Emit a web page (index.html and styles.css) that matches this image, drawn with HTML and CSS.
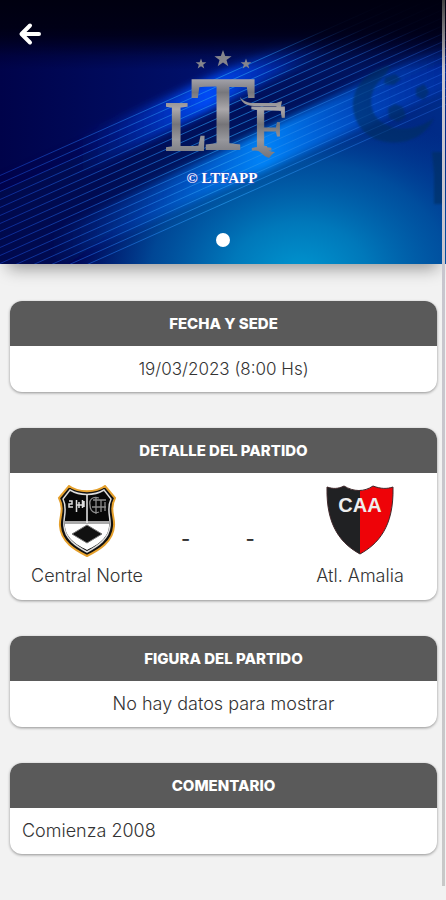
FILE: index.html
```html
<!DOCTYPE html>
<html lang="es">
<head>
<meta charset="utf-8">
<meta name="viewport" content="width=device-width, initial-scale=1">
<title>LTFAPP - Partido</title>
<link rel="stylesheet" href="styles.css">
</head>
<body>
<header class="hero">
  <svg class="hero-art" viewBox="0 0 446 264" role="img" aria-label="LTFAPP">
    <defs>
      <linearGradient id="base" x1="0" y1="0" x2="1" y2="0">
        <stop offset="0" stop-color="#00034a"/><stop offset=".45" stop-color="#00106a"/><stop offset="1" stop-color="#002c88"/>
      </linearGradient>
      <radialGradient id="pool" gradientUnits="userSpaceOnUse" cx="0" cy="0" r="1" gradientTransform="translate(300 275) scale(230 175)">
        <stop offset="0" stop-color="#0096d0"/><stop offset=".3" stop-color="#0078ba"/><stop offset=".65" stop-color="#005aa6" stop-opacity=".75"/><stop offset="1" stop-color="#00409a" stop-opacity="0"/>
      </radialGradient>
      <linearGradient id="night" x1="0" y1="0" x2="0" y2="1">
        <stop offset="0" stop-color="#000010"/><stop offset=".5" stop-color="#000016" stop-opacity=".9"/><stop offset="1" stop-color="#000030" stop-opacity="0"/>
      </linearGradient>
      <linearGradient id="ray" gradientUnits="userSpaceOnUse" x1="75" y1="0" x2="340" y2="0">
        <stop offset="0" stop-color="#0030c8" stop-opacity="0"/><stop offset=".5" stop-color="#004cf8"/><stop offset="1" stop-color="#0030c8" stop-opacity="0"/>
      </linearGradient>
      <linearGradient id="ray2" gradientUnits="userSpaceOnUse" x1="50" y1="0" x2="440" y2="0">
        <stop offset="0" stop-color="#0050d8" stop-opacity="0"/><stop offset=".25" stop-color="#0058d8" stop-opacity=".5"/><stop offset=".55" stop-color="#0088ff"/><stop offset="1" stop-color="#0038c8" stop-opacity=".4"/>
      </linearGradient>
      <linearGradient id="line" gradientUnits="userSpaceOnUse" x1="0" y1="0" x2="446" y2="0">
        <stop offset="0" stop-color="#1848d8" stop-opacity=".5"/><stop offset=".5" stop-color="#289cf0" stop-opacity=".65"/><stop offset="1" stop-color="#2868e8" stop-opacity=".35"/>
      </linearGradient>
      <linearGradient id="steel" gradientUnits="userSpaceOnUse" x1="0" y1="74" x2="0" y2="158">
        <stop offset="0" stop-color="#b4b2bb"/><stop offset=".22" stop-color="#77777c"/><stop offset=".42" stop-color="#aaa7aa"/><stop offset=".6" stop-color="#757478"/><stop offset=".78" stop-color="#97979c"/><stop offset="1" stop-color="#73747b"/>
      </linearGradient>
      <filter id="soft4" x="-20%" y="-20%" width="140%" height="140%"><feGaussianBlur stdDeviation="4"/></filter>
      <filter id="soft9" x="-30%" y="-30%" width="160%" height="160%"><feGaussianBlur stdDeviation="9"/></filter>
      <filter id="soft1" x="-20%" y="-20%" width="140%" height="140%"><feGaussianBlur stdDeviation="1"/></filter>
      <path id="beam" d="M-10 172 L460 -38"/>
      <path id="star" d="M0-9 2.2-2.9 8.6-2.8 3.5 1.1 5.3 7.3 0 3.6-5.3 7.3-3.5 1.1-8.6-2.8-2.2-2.9Z"/>
    </defs>
    <rect width="446" height="264" fill="url(#base)"/>
    <rect width="446" height="264" fill="url(#pool)"/>
    <path d="M-10 330V196L446 -4V60L180 180 60 270Z" fill="#000c50" opacity=".65" filter="url(#soft9)"/>
    <path d="M60 146 300 36 330 50 60 186Z" fill="url(#ray)" filter="url(#soft4)"/>
    <path d="M40 238 446 42 446 90 60 262Z" fill="url(#ray2)" opacity=".95" filter="url(#soft4)"/>
    <rect width="446" height="70" fill="url(#night)"/>
    <g stroke="url(#line)" stroke-width="1">
      <use href="#beam" y="8"/><use href="#beam" y="16"/><use href="#beam" y="24"/><use href="#beam" y="32"/><use href="#beam" y="40"/><use href="#beam" y="48"/><use href="#beam" y="56"/><use href="#beam" y="64"/><use href="#beam" y="72"/><use href="#beam" y="80"/><use href="#beam" y="88"/><use href="#beam" y="96"/><use href="#beam" y="104"/><use href="#beam" y="112"/><use href="#beam" y="120"/><use href="#beam" y="128"/><use href="#beam" y="136"/>
    </g>
    <rect width="446" height="56" fill="url(#night)"/>
    <g fill="#002f5c" opacity=".55" filter="url(#soft1)">
      <path d="M390 65C364 72 352 88 353 108C356 134 378 145 401 142C417 140 429 130 434 118C420 128 403 132 389 126C373 120 368 105 373 91C377 80 388 76 390 65Z"/>
      <path d="m385 77 10-3 6 5-7 6-10-1ZM388 108l7-4 8 3 3 10-8 5-9-4ZM416 88l8-4 5 8-5 8-8-4ZM432 152h12v52h-10v-30Z"/>
    </g>
    <g fill="url(#steel)">
      <text class="mark mark-l" x="165" y="150">L</text>
      <text class="mark mark-t" x="223" y="149" text-anchor="middle">T</text>
      <text class="mark mark-f" x="250" y="150">F</text>
      <path d="M240 97c3 4 8 6 14 6h22l6-2-2 10-4-5h-22c-8 0-13-4-14-9ZM254 150c7 0 8 6 15 8 3-4 5-5 6-6-6 0-8-3-8-6h-8c0 3-2 4-5 4Z"/>
    </g>
    <g fill="#85858c">
      <use href="#star" x="223" y="59"/>
      <use href="#star" transform="translate(201 64) scale(.62)"/>
      <use href="#star" transform="translate(246 64) scale(.62)"/>
    </g>
    <text class="brand" x="222" y="183" text-anchor="middle">© LTFAPP</text>
  </svg>
  <button class="back" type="button" aria-label="Volver">
    <svg viewBox="0 0 24 24" width="24" height="24"><path d="M12 3.500 3.500 12 12 20.500M4 12H21" fill="none" stroke="#fff" stroke-width="4" stroke-linecap="round" stroke-linejoin="round"/></svg>
  </button>
  <span class="dot"></span>
</header>
<main class="content">
  <section class="card">
    <h2>FECHA Y SEDE</h2>
    <p class="date">19/03/2023 (8:00 Hs)</p>
  </section>
  <section class="card">
    <h2>DETALLE DEL PARTIDO</h2>
    <div class="match">
      <div class="team">
        <svg class="crest" viewBox="0 0 72 72" aria-hidden="true">
          <path d="M18 1C27 8 45 8 54 1L64 13C58 25 64 32 63 41C62 57 48 65 36 71C24 65 10 57 9 41C8 32 14 25 8 13Z" fill="#111" stroke="#e5a02c" stroke-width="2"/>
          <path d="M19 5C29 11 43 11 53 5L60 14C55 24 60 32 59 41C58 54 47 61 36 67C25 61 14 54 13 41C12 32 17 24 12 14Z" fill="#080808" stroke="#ddd" stroke-width="1.500"/>
          <path d="M14 38H58C59 52 48 59 36 65C24 59 13 52 14 38Z" fill="#fff"/>
          <path d="M14 37.500H58" stroke="#aaa" stroke-width="3"/>
          <path d="M36 10V38" stroke="#eee" stroke-width="1.500"/>
          <path d="m36 40 15 9-15 9-15-9Z" fill="#111" stroke="#777"/>
          <path d="M18 16h3v3h-3v3h4M25.500 15v12M25 20h6M31.500 15v8M28 17v6M33 16v6" fill="none" stroke="#ddd" stroke-width="1.500"/>
          <path d="M48 13c-7-2-10 2-9 7 0 6 4 9 9 7M42 15h13M45 12v17M50 15v12M54 17v9M41 22h14" fill="none" stroke="#8c8c8c" stroke-width="1.300"/>
        </svg>
        <span>Central Norte</span>
      </div>
      <span class="score">-</span>
      <span class="score">-</span>
      <div class="team">
        <svg class="crest" viewBox="0 0 72 72" aria-hidden="true">
          <path d="M3 2C9 4 14 4 20 1C26 5 31 6 36 5V69C18 59 2 42 3 2Z" fill="#202123"/>
          <path d="M69 2C63 4 57 4 49 1C43 5 40 6 36 5V69C54 59 70 42 69 2Z" fill="#ee0308"/>
          <path d="M3 2C9 4 14 4 20 1C30 7 40 7 49 1C57 4 63 4 69 2C70 42 54 59 36 69C18 59 2 42 3 2Z" fill="none" stroke="#40282b"/>
          <text class="crest-text" x="36" y="27" text-anchor="middle">CAA</text>
        </svg>
        <span>Atl. Amalia</span>
      </div>
    </div>
  </section>
  <section class="card">
    <h2>FIGURA DEL PARTIDO</h2>
    <p>No hay datos para mostrar</p>
  </section>
  <section class="card">
    <h2>COMENTARIO</h2>
    <p class="comment">Comienza 2008</p>
  </section>
</main>
<div class="scrollbar"></div>
</body>
</html>
```
FILE: styles.css
```css
* { box-sizing: border-box; }
body {
  margin: 0;
  min-height: 100vh;
  background: #f2f2f2;
  color: #333;
  font-family: Inter, "Liberation Sans", sans-serif;
  font-size: 18px;
  font-weight: 300;
  line-height: 24px;
}
.hero {
  position: relative;
  box-shadow: 0 12px 16px -8px rgba(0, 0, 0, .4);
}
.hero-art { display: block; width: 100%; height: auto; }
.mark { font-family: "Liberation Serif", serif; font-weight: 400; stroke: url(#steel); }
.mark-l { font-size: 70px; stroke-width: 2px; }
.mark-t { font-size: 104px; stroke-width: 3px; }
.mark-f { font-size: 66px; stroke-width: 1px; }
.brand {
  font: 700 15px "Liberation Serif", serif;
  fill: #fff;
  stroke: #2a50c8;
  stroke-width: 1px;
  paint-order: stroke;
}
.back {
  position: absolute;
  top: 22px;
  left: 18px;
  padding: 0;
  border: 0;
  background: none;
  line-height: 0;
}
.dot {
  position: absolute;
  bottom: 17px;
  left: 50%;
  width: 14px;
  height: 14px;
  margin-left: -7px;
  border-radius: 50%;
  background: #fff;
}
.content {
  display: grid;
  gap: 36px;
  padding: 37px 9px 44px 10px;
}
.card {
  overflow: hidden;
  border-radius: 12px;
  background: #fff;
  box-shadow: 0 1px 3px rgba(0, 0, 0, .4);
}
.card h2 {
  margin: 0;
  padding: 11px;
  background: #5a5a5a;
  color: #fff;
  font-size: 15px;
  font-weight: 800;
  line-height: 23px;
  text-align: center;
}
.card p { margin: 0; padding: 11px 12px; text-align: center; }
.card .date { font-size: 17px; }
.card .comment { text-align: left; }
.match {
  display: grid;
  grid-template-columns: 154fr 43fr 86fr 134fr;
  align-items: center;
  padding: 12px 10px 12px 0;
}
.team {
  display: grid;
  justify-items: center;
  gap: 7px;
  white-space: nowrap;
}
.crest { width: 72px; height: 72px; }
.crest-text {
  font: 700 20px "Liberation Sans", sans-serif;
  fill: #eee;
}
.score { padding-top: 4px; font-size: 20px; font-weight: 500; text-align: center; }
.scrollbar {
  position: fixed;
  top: 0;
  right: 1px;
  bottom: 14px;
  width: 3px;
  background: linear-gradient(#444, #c8c5d0 70px, #c8c8c8);
}
```
